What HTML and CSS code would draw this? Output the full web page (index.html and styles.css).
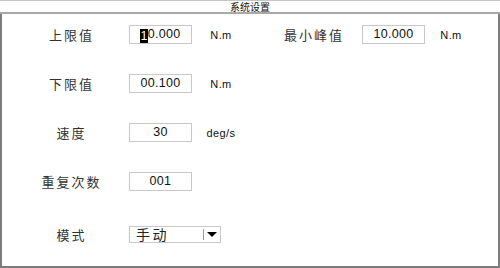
FILE: index.html
```html
<!DOCTYPE html>
<html lang="zh-CN">
<head>
    <meta charset="UTF-8">
    <title>系统设置</title>
    <link rel="stylesheet" href="styles.css">
</head>
<body>
    <div class="window">
        <div class="title-bar">系统设置</div>
        <div class="panel">
            <div class="row">
                <span class="label">上限值</span>
                <div class="field"><span class="caret">1</span>0.000</div>
                <span class="unit">N.m</span>
                <span class="label label-wide">最小峰值</span>
                <div class="field">10.000</div>
                <span class="unit unit-right">N.m</span>
            </div>
            <div class="row">
                <span class="label">下限值</span>
                <div class="field">00.100</div>
                <span class="unit">N.m</span>
            </div>
            <div class="row">
                <span class="label">速度</span>
                <div class="field">30</div>
                <span class="unit">deg/s</span>
            </div>
            <div class="row">
                <span class="label">重复次数</span>
                <div class="field">001</div>
            </div>
            <div class="row row-last">
                <span class="label">模式</span>
                <div class="select">
                    <span class="select-text">手动</span>
                    <span class="select-arrow"></span>
                </div>
            </div>
        </div>
    </div>
</body>
</html>
```

FILE: styles.css
```css
body {
    margin: 0;
    padding: 0;
    background: #ffffff;
    font-family: 'Liberation Sans', 'Noto Sans CJK SC', sans-serif;
}

.window {
    width: 500px;
    height: 268px;
    display: flex;
    flex-direction: column;
    box-sizing: border-box;
}

.title-bar {
    height: 11px;
    border-top: 1px solid #c4c4c4;
    border-bottom: 2px solid #a8a8a8;
    font-family: 'Noto Sans CJK SC', sans-serif;
    font-size: 10px;
    line-height: 11px;
    text-align: center;
    color: #111;
}

.panel {
    flex: 1;
    border-left: 2px solid #7c7c7c;
    border-right: 2px solid #7c7c7c;
    border-bottom: 2px solid #7c7c7c;
    padding-top: 11px;
    display: flex;
    flex-direction: column;
    gap: 30px;
}

.row {
    display: flex;
    align-items: center;
    height: 19px;
}

.row-last {
    margin-top: 5px;
    height: 17px;
}

.label {
    margin-left: 12px;
    width: 115px;
    text-align: center;
    font-family: 'Noto Sans CJK SC', sans-serif;
    font-size: 13px;
    letter-spacing: 2px;
    color: #333;
}

.label-wide {
    margin-left: 25px;
    width: 96px;
}

.field {
    width: 63px;
    height: 19px;
    box-sizing: border-box;
    border: 1px solid #c8c8c8;
    font-size: 12.5px;
    letter-spacing: 0.3px;
    line-height: 17px;
    text-align: center;
    color: #111;
}

.caret {
    display: inline-block;
    height: 14px;
    line-height: 14px;
    vertical-align: -2px;
    background: #000;
    color: #fff;
}

.unit {
    margin-left: 9px;
    width: 40px;
    text-align: center;
    font-size: 11px;
    letter-spacing: 0.4px;
    color: #111;
}

.unit-right {
    margin-left: 6px;
}

.select {
    width: 92px;
    height: 17px;
    box-sizing: border-box;
    border: 1px solid #c8c8c8;
    display: flex;
    align-items: center;
}

.select-text {
    flex: 1;
    padding-left: 6px;
    font-family: 'Noto Sans CJK SC', sans-serif;
    font-size: 14px;
    letter-spacing: 2.5px;
    line-height: 15px;
    color: #222;
}

.select-arrow {
    width: 16px;
    height: 11px;
    border-left: 1px solid #999;
    position: relative;
}

.select-arrow::after {
    content: '';
    position: absolute;
    left: 3px;
    top: 3px;
    border-left: 5px solid transparent;
    border-right: 5px solid transparent;
    border-top: 5px solid #000;
}
```
